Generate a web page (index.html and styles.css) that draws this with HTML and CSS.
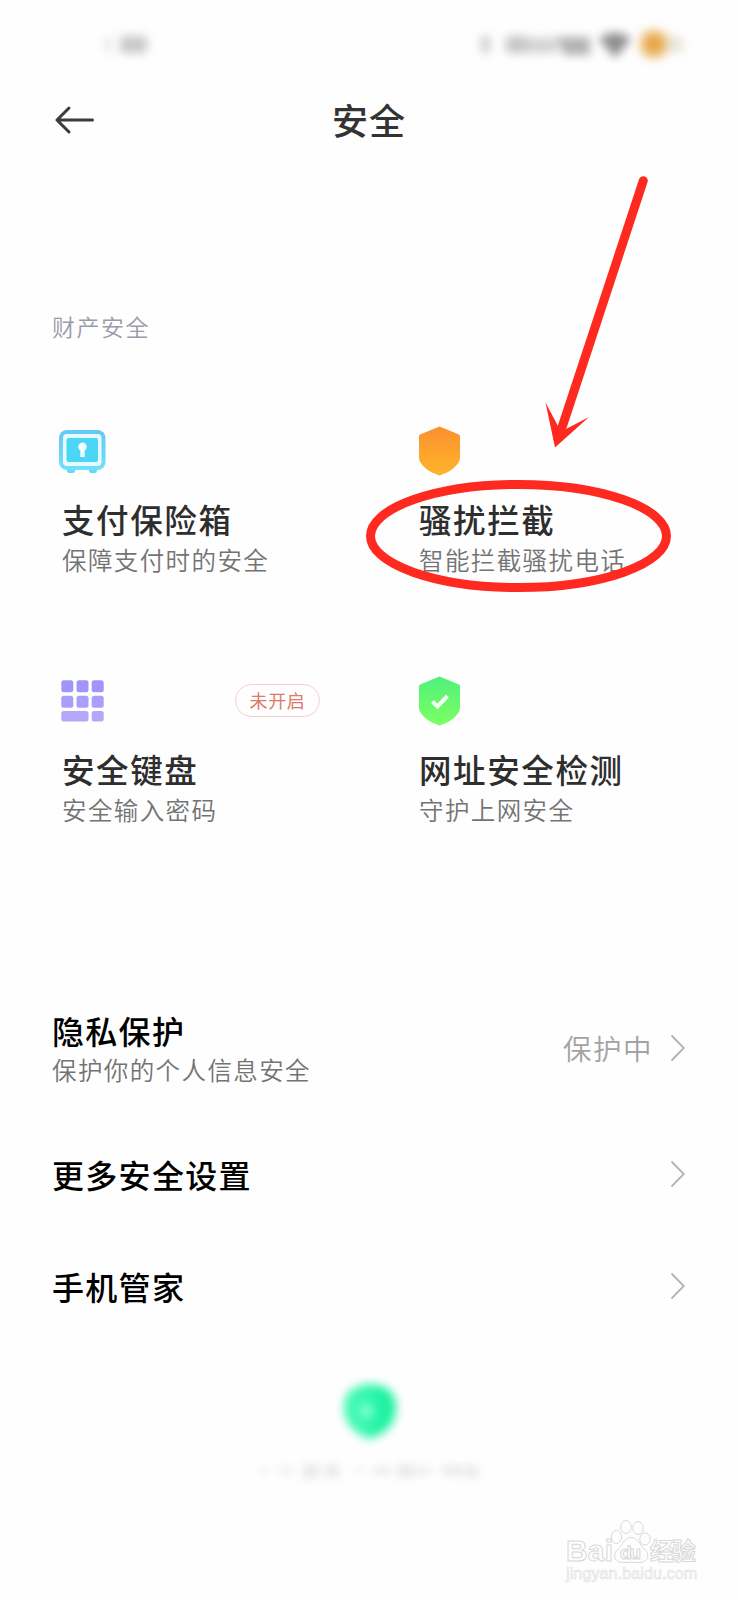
FILE: index.html
```html
<!DOCTYPE html>
<html lang="zh-CN">
<head>
    <meta charset="UTF-8">
    <title>安全</title>
    <link rel="stylesheet" href="styles.css">
</head>
<body>
    <div class="status-bar">
        <svg class="status-time" width="60" height="44" viewBox="0 0 60 44">
            <rect x="11" y="15" width="4" height="15" fill="#d8d8d8"/>
            <rect x="25" y="14" width="27" height="17" rx="4" fill="#c8c8c8"/>
        </svg>
        <svg class="status-icons" width="220" height="44" viewBox="0 0 220 44">
            <rect x="11" y="14" width="9" height="17" rx="3" fill="#cdcdcd"/>
            <rect x="36" y="14" width="22" height="17" rx="3" fill="#c6c6c6"/>
            <rect x="57" y="16" width="30" height="15" rx="3" fill="#d2d2d2"/>
            <path d="M86 15h34v18H94z" fill="#b2b2b2"/>
            <path d="M129 17q16-13 32 0l-16 19z" fill="#8e8e8e"/>
            <rect x="170" y="8" width="28" height="28" rx="12" fill="#edbc72"/>
            <circle cx="184" cy="22" r="7" fill="#e4a13c"/>
            <rect x="197" y="14" width="16" height="17" rx="5" fill="#e8e5dc"/>
        </svg>
    </div>

    <header class="title-bar">
        <svg class="back" width="42" height="30" viewBox="0 0 42 30">
            <path d="M16 3L4 15l12 12M4 15h35.500" fill="none" stroke="#3b3b3b" stroke-width="3" stroke-linecap="round" stroke-linejoin="round"/>
        </svg>
        <h1>安全</h1>
    </header>

    <h2 class="section-title">财产安全</h2>

    <div class="grid">
        <div class="card">
            <div class="card-top">
                <svg width="48" height="50" viewBox="0 0 48 50">
                    <defs>
                        <linearGradient id="safe" x1="0" y1="0" x2="0" y2="1">
                            <stop offset="0" stop-color="#66c8f4"/>
                            <stop offset="1" stop-color="#70e0fb"/>
                        </linearGradient>
                    </defs>
                    <rect x="9" y="40" width="8" height="7" rx="2" fill="#62dcf8"/>
                    <rect x="31" y="40" width="8" height="7" rx="2" fill="#62dcf8"/>
                    <rect x="1" y="4" width="46.500" height="40" rx="8" fill="url(#safe)"/>
                    <rect x="5" y="8" width="38.500" height="32" rx="4" fill="#e6fbff"/>
                    <rect x="8.500" y="12" width="31.500" height="24" rx="2" fill="#4cd6f6"/>
                    <path d="M22.300 31v-6.500a4.300 4.300 0 1 1 4.400 0V31z" fill="#f3fdff"/>
                </svg>
            </div>
            <h3>支付保险箱</h3>
            <p>保障支付时的安全</p>
        </div>

        <div class="card">
            <div class="card-top">
                <svg width="42" height="50" viewBox="0 0 42 50">
                    <defs>
                        <linearGradient id="orange" x1="0" y1="0" x2="0" y2="1">
                            <stop offset="0" stop-color="#fb9030"/>
                            <stop offset="1" stop-color="#ffb52a"/>
                        </linearGradient>
                    </defs>
                    <path d="M21.500.500L41 8.500q1 .5 1 2V32q0 3-2.500 6-6 8-18 11.500Q9.500 46 3.500 38 1 35 1 32V10.500q0-1.500 1-2z" fill="url(#orange)"/>
                </svg>
            </div>
            <h3>骚扰拦截</h3>
            <p>智能拦截骚扰电话</p>
        </div>

        <div class="card">
            <div class="card-top">
                <svg width="48" height="50" viewBox="0 0 48 50">
                    <g fill="#a195fb">
                        <rect x="3.300" y="4.200" width="12" height="12" rx="2.500"/>
                        <rect x="18.500" y="4.200" width="12" height="12" rx="2.500"/>
                        <rect x="33.700" y="4.200" width="12" height="12" rx="2.500"/>
                    </g>
                    <g fill="#aa9efb">
                        <rect x="3.300" y="19.800" width="12" height="12" rx="2.500"/>
                        <rect x="18.500" y="19.800" width="12" height="12" rx="2.500"/>
                        <rect x="33.700" y="19.800" width="12" height="12" rx="2.500"/>
                    </g>
                    <g fill="#b4a6fb">
                        <rect x="3.300" y="35" width="27.200" height="10.500" rx="2.500"/>
                        <rect x="33.700" y="35" width="12" height="10.500" rx="2.500"/>
                    </g>
                </svg>
                <span class="badge">未开启</span>
            </div>
            <h3>安全键盘</h3>
            <p>安全输入密码</p>
        </div>

        <div class="card">
            <div class="card-top">
                <svg width="42" height="50" viewBox="0 0 42 50">
                    <defs>
                        <linearGradient id="green" x1="0" y1="0" x2="0" y2="1">
                            <stop offset="0" stop-color="#50f07c"/>
                            <stop offset="1" stop-color="#7dff62"/>
                        </linearGradient>
                    </defs>
                    <path d="M21.500.500L41 8.500q1 .5 1 2V32q0 3-2.500 6-6 8-18 11.500Q9.500 46 3.500 38 1 35 1 32V10.500q0-1.500 1-2z" fill="url(#green)"/>
                    <path d="M14.500 25.500l5 5 10-10.500" fill="none" stroke="#f0fff0" stroke-width="4"/>
                </svg>
            </div>
            <h3>网址安全检测</h3>
            <p>守护上网安全</p>
        </div>
    </div>

    <ul class="list">
        <li class="row row-tall">
            <div class="row-text">
                <h3>隐私保护</h3>
                <p>保护你的个人信息安全</p>
            </div>
            <span class="row-state">保护中</span>
            <svg class="arrow" width="16" height="28" viewBox="0 0 16 28"><path d="M1.500 1.500L13.800 14 1.500 26.500"/></svg>
        </li>
        <li class="row">
            <h3>更多安全设置</h3>
            <svg class="arrow" width="16" height="28" viewBox="0 0 16 28"><path d="M1.500 1.500L13.800 14 1.500 26.500"/></svg>
        </li>
        <li class="row">
            <h3>手机管家</h3>
            <svg class="arrow" width="16" height="28" viewBox="0 0 16 28"><path d="M1.500 1.500L13.800 14 1.500 26.500"/></svg>
        </li>
    </ul>

    <div class="footer">
        <svg width="240" height="130" viewBox="0 0 240 130">
            <defs>
                <linearGradient id="mint">
                    <stop offset="0.3" stop-color="#40f8b2"/>
                    <stop offset="0.75" stop-color="#1ef2a2"/>
                </linearGradient>
            </defs>
            <g class="soft">
                <path d="M121 14q13 0 21 8 5 5 5 16 0 22-26 31-26-9-26-31 0-11 5-16 8-8 21-8z" fill="url(#mint)"/>
                <circle cx="118" cy="41" r="7" fill="#80ffd2"/>
            </g>
            <g class="soft-text" fill="#e8e8ea">
                <rect x="13" y="98" width="5" height="6"/>
                <rect x="30" y="98" width="14" height="5"/>
                <rect x="54" y="95" width="16" height="13"/>
                <rect x="76" y="95" width="14" height="12"/>
                <rect x="106" y="98" width="7" height="4"/>
                <rect x="124" y="98" width="18" height="6"/>
                <rect x="148" y="95" width="18" height="12"/>
                <rect x="168" y="98" width="14" height="6"/>
                <rect x="193" y="96" width="20" height="9"/>
                <rect x="215" y="96" width="14" height="11"/>
            </g>
        </svg>
    </div>

    <!-- arrow and circle around the call blocking card -->
    <svg class="marker" width="738" height="620" viewBox="0 0 738 620">
        <path d="M643.300 180.700L561.500 429" stroke="#fe2a20" stroke-width="9" stroke-linecap="round"/>
        <path d="M555 447.500L545.500 402.500l12.500 23.500 8 3 23-12z" fill="#fe2a20"/>
        <ellipse cx="518.500" cy="536" rx="148" ry="51.500" fill="none" stroke="#fe2a20" stroke-width="9"/>
    </svg>

    <svg class="watermark" width="150" height="80" viewBox="0 0 150 80">
        <g fill="#fefefe" stroke="#d8d8d8" stroke-width="1">
            <text class="wm-logo" x="11" y="41" textLength="47">Bai</text>
            <ellipse cx="61.500" cy="17" rx="5.200" ry="6.500"/>
            <ellipse cx="71" cy="7" rx="5.200" ry="6.500"/>
            <ellipse cx="83" cy="8" rx="5.200" ry="6.500"/>
            <ellipse cx="90" cy="19" rx="5.200" ry="6"/>
            <path d="M76 17.500c6 0 8 5 11 9 3 3.500 7 6 5.500 11-2 6-9 5.500-16.500 4.500-7 1-14 1.500-16-4.500-1.500-5 2.500-7.500 5.500-11 3-4 5-9 10.500-9z"/>
            <text class="wm-du" x="65" y="39" textLength="21">du</text>
            <text class="wm-cn" x="95" y="40" textLength="46">经验</text>
        </g>
        <text class="wm-url" x="11" y="59" textLength="131" fill="#fff" stroke="#e2e2e2" stroke-width="0.700">jingyan.baidu.com</text>
    </svg>
</body>
</html>
```

FILE: styles.css
```css
* {
    box-sizing: border-box;
    margin: 0;
    padding: 0;
}

body {
    position: relative;
    width: 738px;
    height: 1600px;
    overflow: hidden;
    background-color: #fefefe;
    color: #2e2e2e;
    font-family: "Noto Sans CJK SC", sans-serif;
}

svg {
    display: block;
    flex-shrink: 0;
}

h1, h2, h3, p {
    white-space: nowrap;
}

.status-bar {
    display: flex;
    justify-content: space-between;
    height: 90px;
    padding: 22px 48px 0 95px;
}

.status-time,
.status-icons {
    overflow: visible;
    filter: blur(5px);
}

.title-bar {
    display: flex;
    align-items: center;
    height: 60px;
    padding: 0 53px;
}

.title-bar h1 {
    flex: 1;
    margin: -2px 42px 0 0;
    text-align: center;
    font-size: 36px;
    line-height: 60px;
    font-weight: 500;
    letter-spacing: 1px;
    color: #333;
}

.section-title {
    margin: 161px 0 0 52px;
    font-size: 23px;
    line-height: 30px;
    font-weight: 350;
    letter-spacing: 1.500px;
    color: #9a9aaa;
}

.grid {
    display: grid;
    grid-template-columns: 357px 300px;
    row-gap: 99px;
    margin: 85px 0 0 62px;
}

.card {
    height: 151px;
}

.card-top {
    display: flex;
    justify-content: space-between;
    align-items: center;
    height: 50px;
    margin-left: -4px;
    padding-right: 99px;
}

.card:nth-child(even) .card-top {
    margin-left: -1px;
}

.card h3 {
    margin-top: 21px;
    font-size: 32.500px;
    line-height: 44px;
    font-weight: 500;
    letter-spacing: 1.600px;
}

.card p,
.row p {
    margin-top: 1px;
    font-size: 24.500px;
    line-height: 36px;
    font-weight: 350;
    letter-spacing: 1.400px;
    color: #737373;
}

.badge {
    width: 85px;
    height: 33px;
    margin-top: -2px;
    border: 1px solid #f6cfcb;
    border-radius: 17px;
    text-align: center;
    font-size: 18px;
    line-height: 31px;
    letter-spacing: 0.700px;
    color: #dc7a6c;
}

.list {
    margin-top: 151px;
    padding: 0 52px;
    list-style: none;
}

.row {
    display: flex;
    align-items: center;
    height: 112px;
}

.row-tall {
    height: 140px;
}

.row h3 {
    flex: 1;
    font-size: 32px;
    line-height: 42px;
    font-weight: 500;
    letter-spacing: 1.300px;
    color: #000;
}

.row-text {
    flex: 1;
}

.row-state {
    margin: -2px 17px 0 0;
    font-size: 28.500px;
    font-weight: 350;
    letter-spacing: 1.500px;
    color: #a3a3a3;
}

.arrow {
    fill: none;
    stroke: #b3b3b3;
    stroke-width: 1.800;
}

.footer {
    display: flex;
    justify-content: center;
    margin-top: 28px;
}

.soft {
    filter: blur(5px);
}

.soft-text {
    filter: blur(4px);
}

.marker {
    position: absolute;
    top: 0;
    left: 0;
}

.watermark {
    position: absolute;
    right: 33px;
    bottom: 0;
}

.wm-logo {
    font: bold 30px "Liberation Sans", sans-serif;
}

.wm-du {
    font: bold 19px "Liberation Sans", sans-serif;
}

.wm-cn {
    font: bold 24px "Noto Sans CJK SC", sans-serif;
}

.wm-url {
    font: 16px "Liberation Sans", sans-serif;
}
```
